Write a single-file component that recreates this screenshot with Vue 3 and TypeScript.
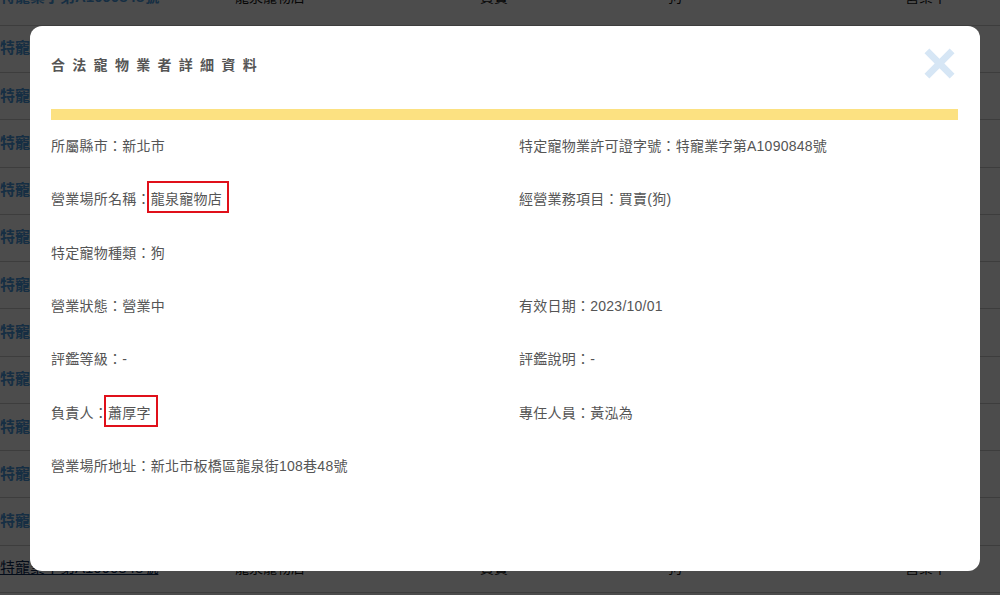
<script setup lang="ts">
interface Bg { no: string; name: string; kind: string; animal: string; status: string }
const rows: Bg[] = Array.from({ length: 13 }, () => ({
  no: '特寵業字第A1090848號', name: '龍泉寵物店', kind: '買賣', animal: '狗', status: '營業中',
}))
const colon = '\uFF1A'
interface Cell { label: string; value: string; mark?: boolean }
const details: (Cell | null)[] = [
  { label: '所屬縣市', value: '新北市' },
  { label: '特定寵物業許可證字號', value: '特寵業字第A1090848號' },
  { label: '營業場所名稱', value: '龍泉寵物店', mark: true },
  { label: '經營業務項目', value: '買賣(狗)' },
  { label: '特定寵物種類', value: '狗' },
  null,
  { label: '營業狀態', value: '營業中' },
  { label: '有效日期', value: '2023/10/01' },
  { label: '評鑑等級', value: '-' },
  { label: '評鑑說明', value: '-' },
  { label: '負責人', value: '蕭厚字', mark: true },
  { label: '專任人員', value: '黃泓為' },
  { label: '營業場所地址', value: '新北市板橋區龍泉街108巷48號' },
  null,
]
</script>

<template>
  <div class="page">
    <div class="table">
      <div v-for="(r, i) in rows" :key="i" class="tr" :class="{ last: i === rows.length - 1 }">
        <span class="no">{{ r.no }}</span>
        <span>{{ r.name }}</span>
        <span>{{ r.kind }}</span>
        <span>{{ r.animal }}</span>
        <span>{{ r.status }}</span>
      </div>
    </div>
    <div class="overlay"></div>
    <section class="modal">
      <header class="head">
        <h2 class="title">合法寵物業者詳細資料</h2>
        <svg class="close" viewBox="0 0 32 32" width="31" height="31" aria-label="關閉">
          <path d="M5.5 0.5 L16 11 L26.5 0.5 L31.5 5.5 L21 16 L31.5 26.5 L26.5 31.5 L16 21 L5.5 31.5 L0.5 26.5 L11 16 L0.5 5.5 Z" fill="#d6e6f5" />
        </svg>
      </header>
      <div class="bar"></div>
      <div class="grid">
        <div v-for="(c, i) in details" :key="i" class="cell">
          <template v-if="c">
            <span>{{ c.label }}{{ colon }}</span><span :class="{ mark: c.mark }">{{ c.value }}</span>
          </template>
        </div>
      </div>
    </section>
  </div>
</template>

<style>
html, body { margin: 0; padding: 0; overflow: hidden; }
</style>

<style scoped>
.page {
  position: relative;
  width: 1000px;
  height: 595px;
  overflow: hidden;
  background: #fff;
  font-family: "Liberation Sans", "Noto Sans CJK TC", sans-serif;
}
.table {
  margin-top: -21.5px;
}
.tr {
  box-sizing: border-box;
  height: 47.27px;
  padding-bottom: 4px;
  display: grid;
  grid-template-columns: 235px 245px 188px 237px 95px;
  align-items: center;
  border-bottom: 1px solid #ccc;
  font-size: 14px;
  color: #111;
}
.tr:first-child {
  padding-bottom: 12px;
}
.no {
  color: #4a9be0;
  font-size: 15px;
  font-weight: 700;
  white-space: nowrap;
}
.tr.last .no {
  color: #0b2a55;
  font-weight: 400;
  text-decoration: underline;
}
.overlay {
  position: absolute;
  inset: 0;
  background: rgba(0, 0, 0, 0.7);
}
.modal {
  position: absolute;
  left: 30px;
  top: 26px;
  width: 950px;
  height: 545px;
  box-sizing: border-box;
  padding: 0 22px 0 21px;
  background: #fff;
  border-radius: 12px;
  color: #555;
}
.head {
  height: 83px;
  display: flex;
  align-items: flex-start;
  justify-content: space-between;
}
.title {
  margin: 29px 0 0;
  font-size: 14px;
  line-height: 20px;
  font-weight: 700;
  letter-spacing: 7.3px;
  color: #555;
}
.close {
  margin: 22px 3px 0 0;
}
.bar {
  height: 11px;
  background: #fce181;
}
.grid {
  display: grid;
  grid-template-columns: 468px 1fr;
  grid-auto-rows: 53.33px;
}
.cell {
  box-sizing: border-box;
  padding-top: 16px;
  font-size: 14px;
  line-height: 20px;
  letter-spacing: 0.25px;
  white-space: nowrap;
}
.mark {
  position: relative;
  display: inline-block;
}
.mark::after {
  content: "";
  position: absolute;
  left: -4px;
  right: -7px;
  top: -8px;
  bottom: -4px;
  border: 2px solid #e0101a;
}
</style>
